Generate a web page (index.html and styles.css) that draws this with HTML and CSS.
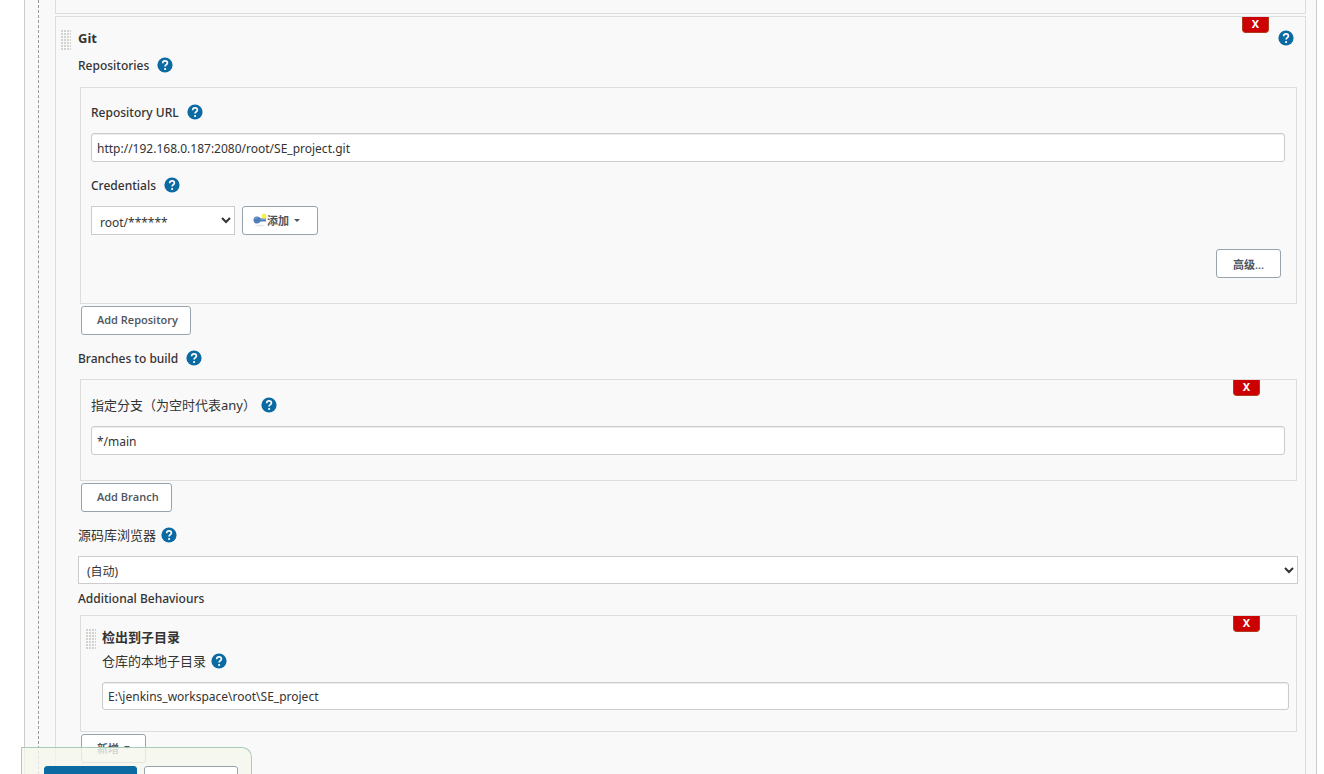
FILE: index.html
```html
<!DOCTYPE html>
<html lang="zh-CN">
<head>
    <meta charset="UTF-8">
    <meta name="viewport" content="width=device-width, initial-scale=1.0">
    <title>Jenkins</title>
    <link rel="stylesheet" href="styles.css">
</head>
<body>
    <svg class="defs" aria-hidden="true">
        <symbol id="help" viewBox="0 0 16 16">
            <circle cx="8" cy="8" r="7.6" fill="#0b6aa2"/>
            <path d="M5.700 6.200C5.700 4.600 6.600 3.800 8 3.800s2.400.8 2.400 2.100c0 1.700-2.300 1.900-2.300 3.700" fill="none" stroke="#fff" stroke-width="1.700"/>
            <circle cx="8.1" cy="12" r="1.100" fill="#fff"/>
        </symbol>
    </svg>

    <form class="config" onsubmit="return false">
        <div class="scm">
            <div class="previous"></div>

            <div class="chunk">
                <button type="button" class="delete">X</button>
                <div class="handle"></div>
                <div class="header">
                    <b>Git</b>
                    <a href="#" class="help" aria-label="Help"><svg><use href="#help"/></svg></a>
                </div>

                <div class="row first">
                    <span>Repositories</span>
                    <a href="#" class="help" aria-label="Help"><svg><use href="#help"/></svg></a>
                </div>
                <div class="box repository">
                    <div class="row">
                        <label for="url">Repository URL</label>
                        <a href="#" class="help" aria-label="Help"><svg><use href="#help"/></svg></a>
                    </div>
                    <input type="text" id="url" value="http://192.168.0.187:2080/root/SE_project.git">
                    <div class="row spaced">
                        <label for="credentials">Credentials</label>
                        <a href="#" class="help" aria-label="Help"><svg><use href="#help"/></svg></a>
                    </div>
                    <div class="credentials">
                        <select id="credentials">
                            <option>root/******</option>
                        </select>
                        <button type="button" class="button add">
                            <svg class="key" viewBox="0 0 14 14">
                                <ellipse cx="7" cy="12.500" rx="5" ry="1" fill="#e9e9e9"/>
                                <path d="M4 3.500c1.700 0 2.800.7 3.400 1.800H13v3.200H7.400C6.800 9.700 5.700 10.500 4 10.500 1.900 10.500.5 9 .5 7S1.900 3.500 4 3.500z" fill="#4f7db8"/>
                                <path d="M2 6c.6-1 1.500-1.300 2.600-1.100" fill="none" stroke="#8fb2dc"/>
                                <path d="M7.500 6.200H13" stroke="#8fb2dc"/>
                                <path d="M11 0l.8 1.200 1.400-.2-.2 1.400.9.800-.9.800.2 1.400-1.400-.2L11 6l-.8-.800-1.400.2.2-1.400-.9-.8.9-.8-.2-1.400 1.400.2z" fill="#f8ee4c"/>
                            </svg>
                            <span>添加</span>
                            <i class="caret"></i>
                        </button>
                    </div>
                    <div class="advanced">
                        <button type="button" class="button">高级...</button>
                    </div>
                </div>
                <button type="button" class="button append">Add Repository</button>

                <div class="row spaced">
                    <span>Branches to build</span>
                    <a href="#" class="help" aria-label="Help"><svg><use href="#help"/></svg></a>
                </div>
                <div class="box branch">
                    <button type="button" class="delete">X</button>
                    <div class="row chinese">
                        <label for="branch">指定分支（为空时代表any）</label>
                        <a href="#" class="help" aria-label="Help"><svg><use href="#help"/></svg></a>
                    </div>
                    <input type="text" id="branch" value="*/main">
                </div>
                <button type="button" class="button append">Add Branch</button>

                <div class="row spaced chinese">
                    <label for="browser">源码库浏览器</label>
                    <a href="#" class="help" aria-label="Help"><svg><use href="#help"/></svg></a>
                </div>
                <select id="browser" class="wide">
                    <option>(自动)</option>
                </select>

                <div class="row behaviours">Additional Behaviours</div>
                <div class="box behaviour">
                    <button type="button" class="delete">X</button>
                    <div class="handle"></div>
                    <div class="header"><b>检出到子目录</b></div>
                    <div class="row chinese">
                        <label for="subdir">仓库的本地子目录</label>
                        <a href="#" class="help" aria-label="Help"><svg><use href="#help"/></svg></a>
                    </div>
                    <input type="text" id="subdir" value="E:\jenkins_workspace\root\SE_project">
                </div>
                <button type="button" class="button append menu">
                    <span>新增</span>
                    <i class="caret"></i>
                </button>
            </div>
        </div>

        <div class="bottom-bar">
            <button type="submit" class="button primary" aria-label="保存"></button>
            <button type="button" class="button" aria-label="应用"></button>
        </div>
    </form>
</body>
</html>
```

FILE: styles.css
```css
* {
    box-sizing: border-box;
}
body {
    margin: 0;
    background-color: #fff;
    color: #333;
    font-family: "Segoe UI", "Noto Sans", "Noto Sans CJK SC", sans-serif;
    font-size: 12px;
}
.defs {
    display: none;
}
.config {
    display: flex;
    min-height: 100vh;
    margin: 0 7px 0 24px;
    padding: 0 10px 0 13px;
    background-color: #f9f9f9;
    border: solid #ccc;
    border-width: 0 1px;
}
.scm {
    display: flex;
    flex-direction: column;
    flex: 1;
    padding-left: 16px;
    border-left: 1px dashed #999;
}
.previous {
    height: 14px;
    margin-bottom: 2px;
    border: 1px solid #ddd;
    border-top: none;
}
.chunk {
    position: relative;
    flex: 1;
    padding: 10px 7px 10px 22px;
    border: 1px solid #ddd;
    border-bottom: none;
}

/* labels */
.header,
.row {
    display: flex;
    align-items: center;
    height: 22px;
}
.header {
    justify-content: space-between;
    margin-right: 4px;
    font-size: 13px;
}
.row {
    gap: 8px;
    margin-bottom: 10px;
    font-weight: 500;
}
.chinese {
    gap: 5px;
    font-size: 13px;
    font-weight: normal;
}
.chinese label {
    padding-bottom: 2px;
}
.first {
    margin: 5px 0 11px;
}
.spaced {
    margin-top: 12px;
}
.behaviours {
    margin: 3px 0 6px;
}
.help,
.help svg {
    display: block;
    width: 16px;
    height: 16px;
}

/* boxes */
.box {
    position: relative;
    margin: 0 1px 2px 2px;
    border: 1px solid #ddd;
}
.repository {
    padding: 13px 11px 25px 10px;
}
.branch {
    padding: 14px 11px 25px 10px;
}
.behaviour {
    padding: 9px 7px 21px 21px;
}
.behaviour .row {
    margin-top: 3px;
}
.behaviour input {
    height: 28px;
}
.handle {
    position: absolute;
    top: 12px;
    left: 4px;
    width: 11px;
    height: 21px;
    background-image:
        linear-gradient(#f9f9f9 1px, transparent 1px),
        linear-gradient(90deg, #f9f9f9 1px, #d2d2ce 1px);
    background-size: 3px 3px;
}
.delete {
    position: absolute;
    top: 0;
    right: 36px;
    width: 27px;
    height: 16px;
    padding: 0 0 1px;
    background-color: #c00;
    color: #fff;
    border: 1px solid #b33a1e;
    border-top: none;
    border-radius: 0 0 4px 4px;
    font-family: inherit;
    font-size: 11px;
    font-weight: bold;
    line-height: 14px;
}

/* controls */
input,
select {
    display: block;
    width: 100%;
    height: 29px;
    background-color: #fff;
    color: #333;
    border: 1px solid #ccc;
    font-family: inherit;
    font-size: 12px;
}
input {
    padding: 1px 5px 0;
    border-radius: 3px;
    box-shadow: inset 0 1px 1px rgba(0, 0, 0, 0.08);
}
select {
    padding: 3px 0 0 4px;
    border-radius: 0;
}
.wide {
    height: 28px;
}
.credentials {
    display: flex;
    gap: 7px;
}
.credentials select {
    width: 144px;
}
.advanced {
    display: flex;
    justify-content: flex-end;
    margin: 14px 4px 0 0;
}
.button {
    display: flex;
    align-items: center;
    height: 29px;
    padding: 0 15px 2px;
    background-color: #fff;
    color: #4d545d;
    border: 1px solid #98a4ad;
    border-radius: 3px;
    font-family: "Segoe UI", "Open Sans", "Noto Sans CJK SC", sans-serif;
    font-size: 11px;
    font-weight: 600;
}
.advanced .button {
    padding: 0 16px;
}
.append {
    margin-left: 3px;
    padding-right: 12px;
}
.menu {
    padding-right: 15px;
}
.add {
    padding: 0 17px 1px 10px;
}
.key {
    width: 14px;
    height: 14px;
}
.caret {
    margin-left: 5px;
    border: 3px solid transparent;
    border-top-color: #4d545d;
    border-bottom: none;
}

/* save and apply */
.bottom-bar {
    position: fixed;
    bottom: -29px;
    left: 21px;
    display: flex;
    gap: 7px;
    padding: 18px 13px 8px 22px;
    background-color: rgba(245, 248, 236, 0.8);
    border: 1px solid #a8ccb8;
    border-bottom: none;
    border-radius: 0 10px 0 0;
}
.bottom-bar .button {
    width: 94px;
}
.bottom-bar .primary {
    width: 93px;
    background-color: #0b6aa2;
    border-color: #0b6aa2;
}
```
